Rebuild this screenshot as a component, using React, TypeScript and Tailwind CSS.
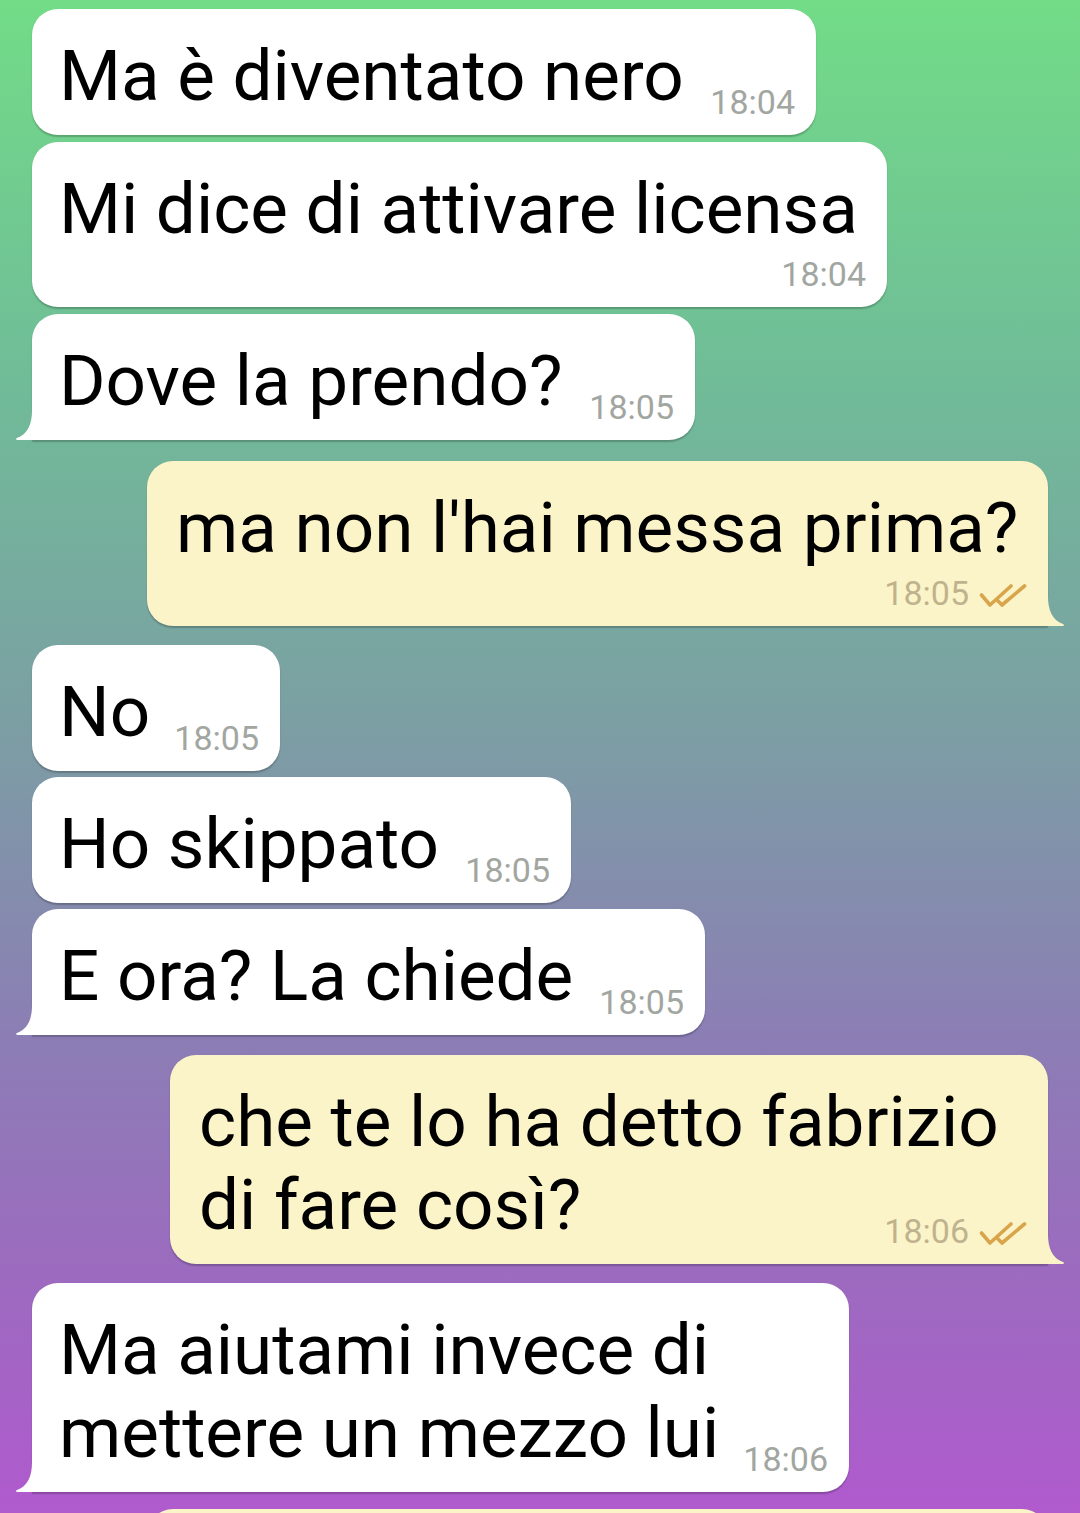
import type React from "react";

type Msg = {
  lines: string[];
  time: string;
  out?: boolean;
  tail?: boolean;
  timeBelow?: boolean;
  w: string;
  mt: string;
};

const messages: Msg[] = [
  { lines: ["Ma è diventato nero"], time: "18:04", w: "w-[784px]", mt: "mt-[9px]" },
  { lines: ["Mi dice di attivare licensa"], time: "18:04", timeBelow: true, w: "w-[855px]", mt: "mt-[7px]" },
  { lines: ["Dove la prendo?"], time: "18:05", tail: true, w: "w-[663px]", mt: "mt-[7px]" },
  { lines: ["ma non l'hai messa prima?"], time: "18:05", out: true, tail: true, timeBelow: true, w: "w-[901px]", mt: "mt-[21px]" },
  { lines: ["No"], time: "18:05", w: "w-[248px]", mt: "mt-[19px]" },
  { lines: ["Ho skippato"], time: "18:05", w: "w-[539px]", mt: "mt-[6px]" },
  { lines: ["E ora? La chiede"], time: "18:05", tail: true, w: "w-[673px]", mt: "mt-[6px]" },
  { lines: ["che te lo ha detto fabrizio", "di fare così?"], time: "18:06", out: true, tail: true, w: "w-[878px]", mt: "mt-[20px]" },
  { lines: ["Ma aiutami invece di", "mettere un mezzo lui"], time: "18:06", tail: true, w: "w-[817px]", mt: "mt-[19px]" },
];

const Checks: React.FC = () => (
  <svg width="48" height="26" viewBox="0 0 48 26" className="ml-[10px] mb-[4px]">
    <g fill="none" stroke="#D9A54B" strokeWidth="3.6" strokeLinecap="round" strokeLinejoin="round">
      <path d="M2.5 12 L11 22 L32 3" />
      <path d="M19 18 L23 22 L45.5 3" />
    </g>
  </svg>
);

const Tail: React.FC<{ out?: boolean }> = ({ out }) => (
  <svg
    width="20"
    height="30"
    viewBox="0 0 20 30"
    className={`absolute bottom-0 ${out ? "right-[-18px] -scale-x-100" : "left-[-18px]"}`}
  >
    <path
      d="M18 0 C18 14 14 24 3 28 C1.5 28.6 1.8 30 3.5 30 L20 30 L20 0 Z"
      fill={out ? "#FCF4C9" : "#FFFFFF"}
    />
  </svg>
);

const Time: React.FC<{ m: Msg }> = ({ m }) => (
  <span className="flex items-end shrink-0">
    <span
      className={`text-[34px] leading-[40px] ${m.out ? "text-[#BFB38E]" : "text-[#A2A6A1]"}`}
    >
      {m.time}
    </span>
    {m.out && <Checks />}
  </span>
);

const Bubble: React.FC<{ m: Msg }> = ({ m }) => {
  const last = m.lines[m.lines.length - 1];
  return (
    <div
      className={`relative shrink-0 rounded-[26px] pr-[21px] pt-[25px] pb-[13px] shadow-[0_1.5px_1.5px_rgba(0,0,0,0.22)] ${
        m.out ? "self-end mr-[32px] bg-[#FCF4C9] pl-[29px]" : "self-start ml-[32px] bg-white pl-[27px]"
      } ${m.tail ? (m.out ? "rounded-br-none" : "rounded-bl-none") : ""} ${m.w} ${m.mt}`}
    >
      {m.lines.slice(0, -1).map((l) => (
        <div key={l} className="text-[71px] leading-[83px] text-black whitespace-nowrap">
          {l}
        </div>
      ))}
      {m.timeBelow ? (
        <>
          <div className="text-[71px] leading-[83px] text-black whitespace-nowrap">{last}</div>
          <div className="flex justify-end mt-[4px]">
            <Time m={m} />
          </div>
        </>
      ) : (
        <div className="flex items-end justify-between">
          <span className="text-[71px] leading-[83px] text-black whitespace-nowrap mb-[5px]">{last}</span>
          <Time m={m} />
        </div>
      )}
      {m.tail && <Tail out={m.out} />}
    </div>
  );
};

export default function App() {
  return (
    <div className="h-[1513px] w-full overflow-hidden flex flex-col font-['Roboto',sans-serif] bg-[linear-gradient(180deg,#72DC87_0%,#70BC98_25%,#7BA0A3_47%,#8C7DB5_69%,#9C6BBF_84%,#B05ACE_100%)]">
      {messages.map((m, i) => (
        <Bubble key={i} m={m} />
      ))}
      {/* next outgoing bubble, cut off at the bottom edge */}
      <div className="shrink-0 self-end mr-[32px] mt-[17px] w-[901px] h-[126px] rounded-[26px] bg-[#FCF4C9] shadow-[0_1.5px_1.5px_rgba(0,0,0,0.22)]" />
    </div>
  );
}
